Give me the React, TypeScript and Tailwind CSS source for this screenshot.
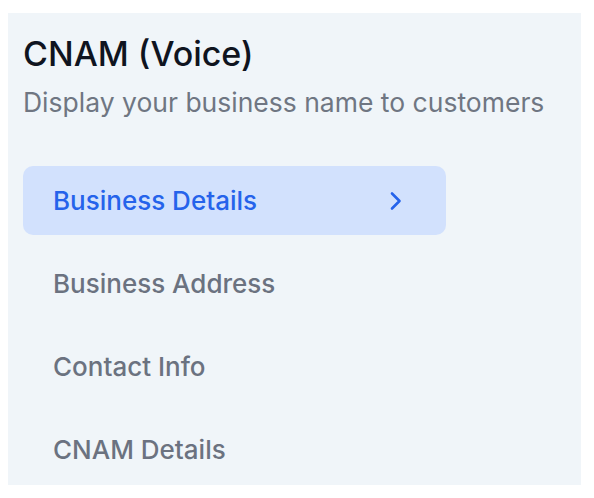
import React from "react";

const steps = ["Business Details", "Business Address", "Contact Info", "CNAM Details"];

export default function App() {
    const active = 0;

    return (
        <div className="w-[594px] h-[498px] bg-white pt-[13px] pl-2" style={{ fontFamily: "Inter, 'Noto Sans', sans-serif" }}>
            <div className="w-[573px] h-[472px] bg-[#f0f5f9] pl-[15px] pt-[21px]">
                {/* 헤더 */}
                <h1 className="text-[34px] leading-[40px] font-medium text-[#0f1420]">CNAM (Voice)</h1>
                <p className="mt-[12px] text-[26.5px] leading-[32px] text-[#6f7682]">
                    Display your business name to customers
                </p>

                {/* 단계 목록 */}
                <ul className="mt-[48px] w-[423px] flex flex-col gap-[14px]">
                    {steps.map((step, i) => (
                        <li
                            key={step}
                            className={`h-[69px] px-[30px] rounded-[10px] flex items-center justify-between text-[26px] font-medium ${
                                i === active ? "bg-[#d2e1fd] text-[#2563eb]" : "text-[#6b7280]"
                            }`}
                        >
                            <span>{step}</span>
                            {i === active && (
                                <svg className="mr-[14px]" width="12" height="20" viewBox="0 0 12 20" fill="none">
                                    <path d="M2 2.5l7.5 7.5-7.5 7.5" stroke="#2563eb" strokeWidth="2.6" strokeLinecap="round" strokeLinejoin="round" />
                                </svg>
                            )}
                        </li>
                    ))}
                </ul>
            </div>
        </div>
    );
}
